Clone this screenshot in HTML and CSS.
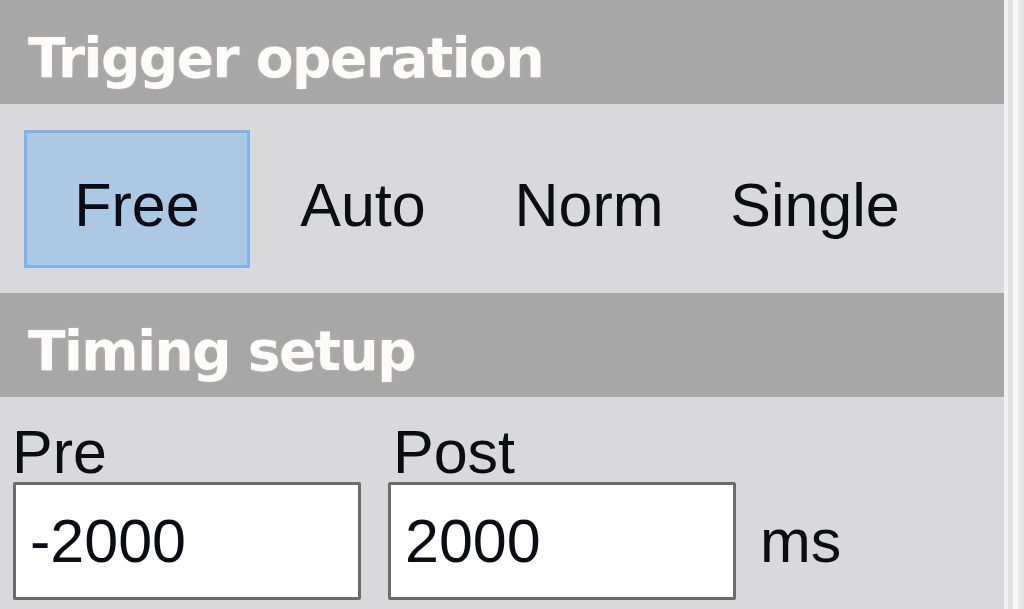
FILE: index.html
```html
<!DOCTYPE html>
<html>
<head>
<meta charset="utf-8">
<link rel="stylesheet" href="styles.css">
</head>
<body>
<div class="wrap">
  <div class="panel">
    <div class="section-head">Trigger operation</div>
    <div class="section-body trigger">
      <div class="modes">
        <div class="mode selected">Free</div>
        <div class="mode">Auto</div>
        <div class="mode">Norm</div>
        <div class="mode">Single</div>
      </div>
    </div>
    <div class="section-head">Timing setup</div>
    <div class="section-body timing">
      <div class="field">
        <div class="label">Pre</div>
        <div class="box">-2000</div>
      </div>
      <div class="field">
        <div class="label">Post</div>
        <div class="box">2000</div>
      </div>
      <div class="unit">ms</div>
    </div>
  </div>
  <div class="edge"></div>
</div>
</body>
</html>
```

FILE: styles.css
```css
html, body {
  margin: 0;
  padding: 0;
  width: 1024px;
  height: 609px;
  overflow: hidden;
  background: #d9d8da;
}
.wrap {
  display: flex;
  height: 609px;
}
.panel {
  width: 1004px;
  background: #d9d8da;
  display: flex;
  flex-direction: column;
  font-family: "Liberation Sans", Arial, sans-serif;
  color: #0c0c14;
}
.edge {
  flex: 1;
  background: linear-gradient(to right, #f2f2f2 0, #f2f2f2 4px, #e1e1e1 4px, #e1e1e1 9px, #f7f7f7 9px, #f7f7f7 14px, #e5e5e5 14px);
}
.section-head {
  height: 104px;
  box-sizing: border-box;
  padding: 26px 0 14px 28px;
  background: #a7a7a7;
  color: #fdfcf8;
  font-family: "DejaVu Sans", Verdana, sans-serif;
  font-weight: bold;
  font-size: 55px;
  line-height: 64px;
  letter-spacing: -1.5px;
  text-shadow: 0 0 2px rgba(255, 255, 255, 0.35);
  white-space: nowrap;
}
.trigger {
  height: 189px;
  box-sizing: border-box;
  padding: 26px 0 0 24px;
}
.modes {
  display: flex;
}
.mode {
  width: 226px;
  height: 138px;
  box-sizing: border-box;
  display: flex;
  align-items: center;
  justify-content: center;
  font-size: 61px;
  line-height: 68px;
  padding-top: 12px;
  border: 3px solid transparent;
}
.mode.selected {
  background: #adc8e2;
  border-color: #7db3ea;
}
.timing {
  flex: 1;
  display: flex;
  align-items: flex-end;
  padding: 25px 0 9px 13px;
  box-sizing: border-box;
}
.field {
  display: flex;
  flex-direction: column;
  margin-right: 27px;
}
.label {
  font-size: 61px;
  line-height: 60px;
  height: 60px;
  margin-left: -1px;
}
.field + .field .label {
  margin-left: 5px;
}
.box {
  width: 348px;
  height: 118px;
  box-sizing: border-box;
  border: 3px solid #6b6b6b;
  border-radius: 2px;
  background: #ffffff;
  padding: 22px 0 0 14px;
  font-size: 61px;
  line-height: 68px;
}
.unit {
  font-size: 61px;
  line-height: 68px;
  margin-left: -3px;
  margin-bottom: 25px;
}
```
